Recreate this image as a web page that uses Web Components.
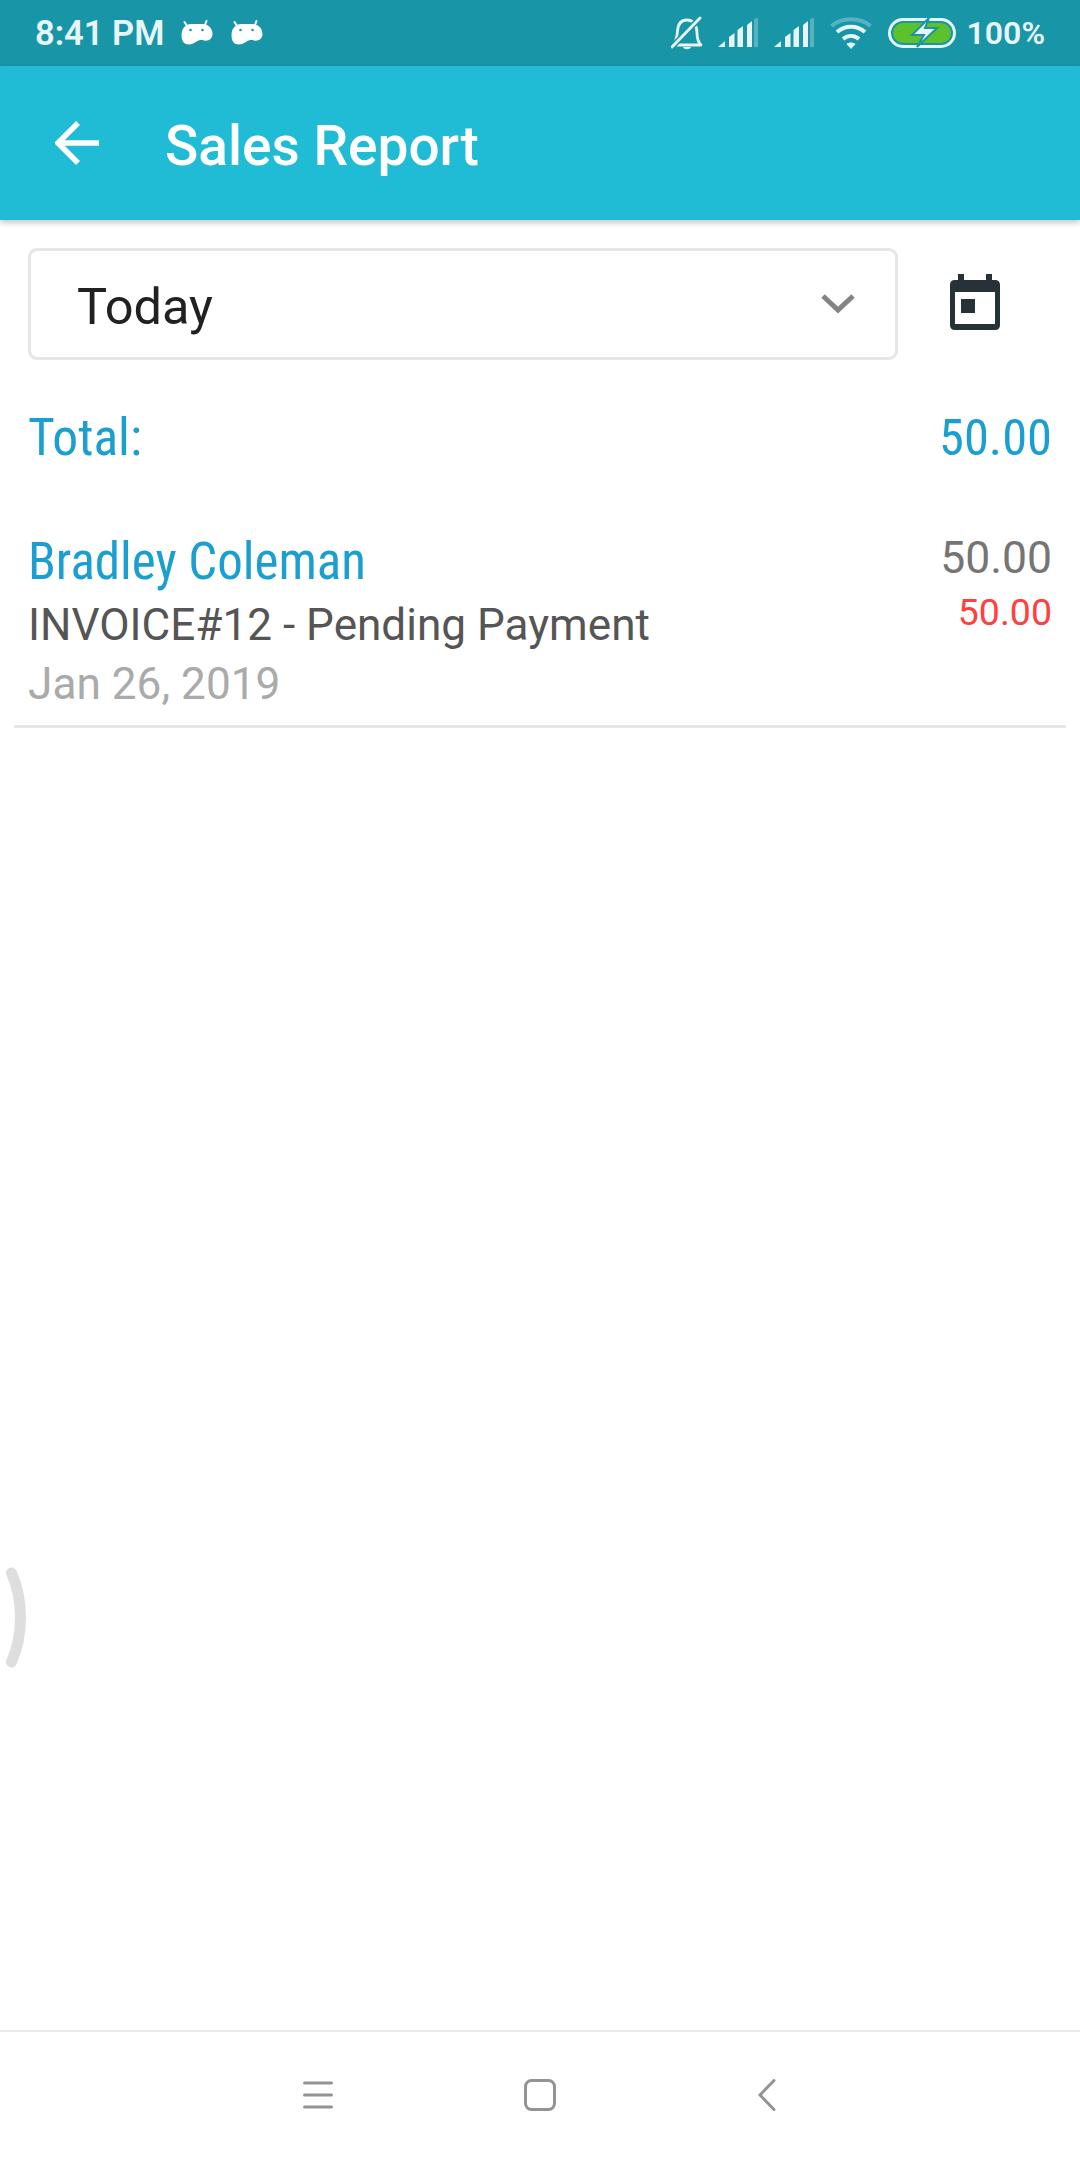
<!DOCTYPE html>
<html>
<head>
<meta charset="utf-8">
<title>Sales Report</title>
<style>
    html, body { margin: 0; padding: 0; background: #fff; }
    body { font-family: Roboto, "Noto Sans", sans-serif; }
    sales-page { height: 2160px; }
</style>
</head>
<body>
<sales-page>
    <status-bar slot="status"></status-bar>
    <app-bar slot="app" heading="Sales Report"></app-bar>
    <report-filter value="Today"></report-filter>
    <total-row amount="50.00"></total-row>
    <sale-item name="Bradley Coleman" detail="INVOICE#12 - Pending Payment" date="Jan 26, 2019" amount="50.00" due="50.00"></sale-item>
    <nav-bar slot="nav"></nav-bar>
</sales-page>

<script>
function define(name, html) {
    const template = document.createElement('template');
    template.innerHTML = html;
    customElements.define(name, class extends HTMLElement {
        constructor() {
            super();
            this.attachShadow({ mode: 'open' }).appendChild(template.content.cloneNode(true));
        }
        connectedCallback() {
            // attributes fill the [data-attr] nodes
            this.shadowRoot.querySelectorAll('[data-attr]').forEach(el => {
                el.textContent = this.getAttribute(el.dataset.attr) || '';
            });
        }
    });
}

define('sales-page', `
    <style>
        :host { display: flex; flex-direction: column; width: 1080px; position: relative; overflow: hidden; background: #fff; }
        main { flex: 1; display: block; }
        svg { position: absolute; left: 0; top: 1565px; }
    </style>
    <slot name="status"></slot>
    <slot name="app"></slot>
    <main><slot></slot></main>
    <slot name="nav"></slot>
    <svg width="30" height="110" viewBox="0 0 30 110"><path d="M11.500 8 C23.500 35 23.500 70 11.500 97" fill="none" stroke="#dedede" stroke-width="11" stroke-linecap="round"/></svg>
`);

const bot = `<svg class="bot" width="32" height="26" viewBox="0 0 32 26"><path d="M3.500 2 L6 6 M25.500 1 L24 5" stroke="#fff" stroke-width="2" stroke-linecap="round"/><path d="M0.500 15 C0.500 8 5 4 10 4 H21 C27 4 31.500 8 31.500 14 C31.500 19 27 21.500 23 20.500 C20 19.700 18 20 15 22 C11 24.500 8 25 5 24 C2 23 0.500 20 0.500 15Z" fill="#fff"/><circle cx="9.500" cy="10" r="1.300" fill="#1896a8"/><circle cx="21.500" cy="10" r="1.300" fill="#1896a8"/></svg>`;
const signal = `<svg class="sig" width="40" height="30" viewBox="0 0 40 30"><path d="M0 29 L7 23 V29Z M11 19 L16.500 15 V29 H11Z M19.500 29 V12 L25 8 V29Z M29 29 V7 L34 3 V29Z" fill="#e8f5f7"/><path d="M36 29 V1 L40 0 V29Z" fill="#e8f5f7" opacity=".3"/></svg>`;

define('status-bar', `
    <style>
        :host { display: flex; align-items: center; height: 66px; background: #1896a8; color: #e8f5f7; font: 500 32px Roboto, sans-serif; padding: 0 35px 0 35px; box-sizing: border-box; }
        svg { display: block; flex: none; }
        .time { font-size: 34.500px; font-weight: 600; margin-right: 17px; }
        .bot { margin-right: 18px; }
        .gap { flex: 1; }
        .bell { margin-right: 15px; }
        .sig { margin-right: 16px; }
        .wifi { margin-right: 16px; }
        .batt { margin-right: 11px; }
        .pct { font-weight: 600; }
    </style>
    <span class="time">8:41 PM</span>
    ${bot}${bot}
    <span class="gap"></span>
    <svg class="bell" width="32" height="34" viewBox="0 0 32 34"><path d="M2 29 H30 C27 26 26 23 26 17 C26 9 22 4 16 4 C10 4 7 8 6.500 15 C6 22 5 26 2 29Z" fill="none" stroke="#e8f5f7" stroke-width="2.800" stroke-linejoin="round"/><path d="M1 31 L29 2" stroke="#1896a8" stroke-width="6"/><path d="M1 31 L29 2" stroke="#e8f5f7" stroke-width="2.800" stroke-linecap="round"/><path d="M12 31 H20 C19 34 13 34 12 31Z" fill="#e8f5f7"/></svg>
    ${signal}${signal}
    <svg class="wifi" width="42" height="32" viewBox="0 0 42 32"><g fill="none" stroke="#e8f5f7" stroke-width="4"><path d="M1.500 9 C12 0 30 0 40.500 9" opacity=".3"/><path d="M7 15 C15 8 27 8 35 15"/><path d="M13 22 C18 18 24 18 29 22"/></g><path d="M16.500 27 C19 25 23 25 25.500 27 L21 32Z" fill="#e8f5f7"/></svg>
    <svg class="batt" width="68" height="32" viewBox="0 0 68 32"><rect x="1.500" y="2.500" width="65" height="27" rx="13.500" fill="none" stroke="#e8f5f7" stroke-width="3"/><rect x="5" y="6" width="58" height="20" rx="10" fill="#5cc22c"/><path d="M41 1 L24 18 H36 L29 30 L49 11 H37Z" fill="#e8f5f7" stroke="#1896a8" stroke-width="2"/></svg>
    <span class="pct">100%</span>
`);

define('app-bar', `
    <style>
        :host { display: flex; align-items: center; height: 154px; background: #20bcd5; color: #fff; position: relative; box-shadow: 0 3px 6px rgba(0,0,0,.22); padding-left: 55px; box-sizing: border-box; }
        svg { display: block; margin-right: 66px; }
        h1 { margin: 5px 0 0; font: 500 55px Roboto, sans-serif; }
    </style>
    <svg width="44" height="44" viewBox="0 0 44 44"><path d="M44 22 H3 M23 2 L3 22 L23 42" fill="none" stroke="#fff" stroke-width="5.500"/></svg>
    <h1 data-attr="heading"></h1>
`);

define('report-filter', `
    <style>
        :host { display: flex; align-items: center; padding: 28px 0 0 28px; }
        .select { display: flex; align-items: center; box-sizing: border-box; width: 870px; height: 112px; border: 3px solid #e6e6e6; border-radius: 9px; padding: 0 40px 0 46px; font: 400 50.500px Roboto, sans-serif; color: #212121; }
        .select span { flex: 1; padding-top: 5px; }
        .cal { margin: 0 0 5px 52px; display: block; }
    </style>
    <div class="select">
        <span data-attr="value"></span>
        <svg width="34" height="20" viewBox="0 0 34 20"><path d="M2 2 L17 16 L32 2" fill="none" stroke="#848484" stroke-width="5"/></svg>
    </div>
    <svg class="cal" width="50" height="56" viewBox="0 0 50 56"><path d="M8 0 H14 V6 H36 V0 H42 V6 H45 Q50 6 50 11 V51 Q50 56 45 56 H5 Q0 56 0 51 V11 Q0 6 5 6 H8Z M5 18 V50 H45 V18Z M11 25 H25 V39 H11Z" fill="#263238" fill-rule="evenodd"/></svg>
`);

const condensed = 'font-stretch: 75%;';

define('total-row', `
    <style>
        :host { display: flex; justify-content: space-between; align-items: baseline; padding: 0 28px 0 28px; margin-top: 48px; color: #1a9fd0; font: 400 51.500px/60px Roboto, sans-serif; ${condensed} }
        .amount { font-size: 50.500px; }
    </style>
    <span>Total:</span><span class="amount" data-attr="amount"></span>
`);

define('sale-item', `
    <style>
        :host { display: flex; justify-content: space-between; margin: 63px 14px 0; padding: 0 14px 14px 14px; border-bottom: 3px solid #e6e6e6; }
        .name { font: 400 51px/62px Roboto, sans-serif; ${condensed} color: #1a9fd0; }
        .detail { font: 400 44.100px/65px Roboto, sans-serif; color: #555; }
        .date { font: 400 44.200px/53px Roboto, sans-serif; color: #aaa; }
        .right { text-align: right; }
        .amount { font: 400 44.500px/55px Roboto, sans-serif; color: #757575; }
        .due { font: 400 37.500px/52px Roboto, sans-serif; color: #ff4040; }
    </style>
    <div>
        <div class="name" data-attr="name"></div>
        <div class="detail" data-attr="detail"></div>
        <div class="date" data-attr="date"></div>
    </div>
    <div class="right">
        <div class="amount" data-attr="amount"></div>
        <div class="due" data-attr="due"></div>
    </div>
`);

define('nav-bar', `
    <style>
        :host { display: flex; align-items: center; height: 130px; box-sizing: border-box; border-top: 2px solid #e9e9e9; padding: 0 0 3px 303px; background: #fff; }
        svg { display: block; flex: none; }
    </style>
    <svg width="30" height="28" viewBox="0 0 30 28" style="margin-right:191px"><path d="M1.500 2 H28.500 M1.500 14 H28.500 M1.500 26 H28.500" stroke="#939393" stroke-width="3" stroke-linecap="round"/></svg>
    <svg width="32" height="32" viewBox="0 0 32 32" style="margin-right:202px"><rect x="1.500" y="1.500" width="29" height="29" rx="6" fill="none" stroke="#939393" stroke-width="3"/></svg>
    <svg width="18" height="32" viewBox="0 0 18 32"><path d="M16 1.500 L2 16 L16 30.500" fill="none" stroke="#939393" stroke-width="3" stroke-linecap="round"/></svg>
`);
</script>
</body>
</html>
